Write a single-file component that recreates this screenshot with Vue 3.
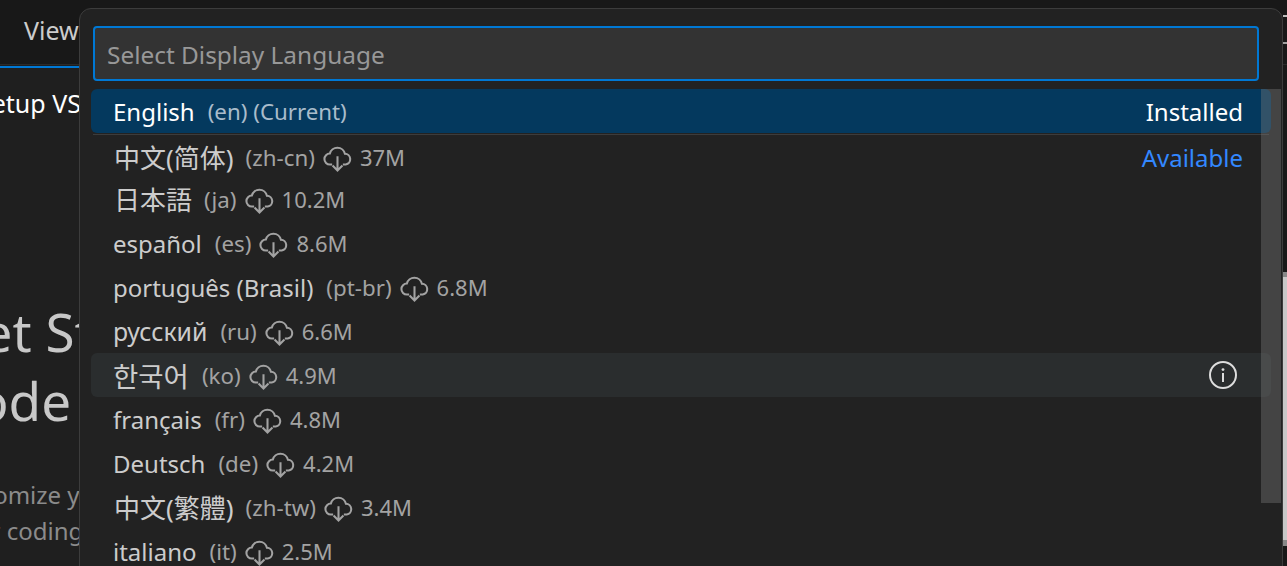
<script setup>
const rows = [
  { label: 'English', desc: '(en) (Current)', right: 'Installed', cls: 'selected', lang: 'en' },
  { label: '中文(简体)', desc: '(zh-cn)', size: '37M', right: 'Available', cls: 'first cjk', lang: 'zh-CN' },
  { label: '日本語', desc: '(ja)', size: '10.2M', cls: 'cjk', lang: 'ja' },
  { label: 'español', desc: '(es)', size: '8.6M', lang: 'es' },
  { label: 'português (Brasil)', desc: '(pt-br)', size: '6.8M', lang: 'pt' },
  { label: 'русский', desc: '(ru)', size: '6.6M', cls: 'ru', lang: 'ru' },
  { label: '한국어', desc: '(ko)', size: '4.9M', cls: 'hover ko', info: true, lang: 'ko' },
  { label: 'français', desc: '(fr)', size: '4.8M', lang: 'fr' },
  { label: 'Deutsch', desc: '(de)', size: '4.2M', lang: 'de' },
  { label: '中文(繁體)', desc: '(zh-tw)', size: '3.4M', cls: 'cjk', lang: 'zh-TW' },
  { label: 'italiano', desc: '(it)', size: '2.5M', lang: 'it' }
]
</script>

<template>
  <div class="page">
    <header class="topbar">
      <span class="menu">View</span>
    </header>
    <div class="tabline"></div>
    <main class="content">
      <div class="crumb">Setup VS</div>
      <h1 class="title">Get St<br /><span class="code">Code</span></h1>
      <p class="sub">Customize y</p>
      <p class="sub second">your coding</p>
    </main>

    <div class="edge">
      <i class="tick t1"></i>
      <i class="tick t2"></i>
      <i class="tick t3"></i>
      <i class="strip"></i>
    </div>

    <section class="picker">
      <div class="input">Select Display Language</div>
      <ul class="list">
        <li v-for="r in rows" :key="r.label" class="row" :class="r.cls" :lang="r.lang">
          <span class="label">{{ r.label }}</span>
          <span class="desc">{{ r.desc }}</span>
          <svg v-if="r.size" class="cloud" viewBox="0 0 16 16" fill="none" stroke="currentColor" stroke-width="1">
            <path d="M5.4 11.4H4.3A2.65 2.65 0 0 1 4.3 6.1 3.75 3.75 0 0 1 11.6 6.2 2.62 2.62 0 0 1 12 11.4H10.6" />
            <path d="M8 7.4V14.2M5.6 11.9L8 14.3 10.4 11.9" />
          </svg>
          <span v-if="r.size" class="size">{{ r.size }}</span>
          <span v-if="r.right" class="right" :class="{ avail: r.right === 'Available' }">{{ r.right }}</span>
          <svg v-if="r.info" class="info" viewBox="0 0 28 28" fill="none" stroke="currentColor">
            <circle cx="14" cy="14" r="13" stroke-width="2" />
            <path d="M14 12v9" stroke-width="2" />
            <circle cx="14" cy="8.6" r="1.4" fill="currentColor" stroke="none" />
          </svg>
        </li>
      </ul>
      <div class="thumb"></div>
    </section>
  </div>
</template>

<style>
html, body { margin: 0; background: #181818; overflow: hidden; }
</style>

<style scoped>
.page {
  position: relative;
  width: 1287px;
  height: 566px;
  overflow: hidden;
  background: #1f1f1f;
  font-family: "Noto Sans", "Noto Sans CJK SC", sans-serif;
  color: #ccc;
}
.topbar {
  height: 64px;
  background: #181818;
  border-bottom: 1px solid #2b2b2b;
  display: flex;
  align-items: center;
  padding-left: 24px;
}
.menu { font-size: 25px; color: #ccc; margin-top: -5px; }
.tabline { height: 2px; margin-top: 1px; background: #0078d4; width: 100px; }
.content { width: 79px; overflow: hidden; white-space: nowrap; }
.crumb { font-size: 25px; color: #fff; margin: 19px 0 0 -22px; line-height: 32px; }
.title { font-size: 53px; font-weight: 400; line-height: 69px; color: #c8c8c8; margin: 178px 0 0 -56px; }
.code { margin-left: -1px; }
.sub { font-size: 24px; color: #8b8b8b; margin: 0; line-height: 36px; }
.sub:first-of-type { margin: 42px 0 0 -57px; }
.second { margin-left: -51px; }

.edge { position: absolute; right: 0; top: 0; width: 4px; height: 566px; background: #181818; }
.tick { position: absolute; left: 0; width: 4px; height: 2px; background: #bbb; }
.t1 { top: 15px; }
.t2 { top: 42px; background: #a0a0a0; }
.t3 { top: 64px; height: 1px; background: #2b2b2b; }
.strip {
  position: absolute;
  left: 0;
  top: 272px;
  width: 4px;
  height: 274px;
  box-sizing: border-box;
  background: #c8c8c8;
  border-top: 5px solid #888;
  border-bottom: 6px solid #888;
}

.picker {
  position: absolute;
  left: 79px;
  top: 8px;
  width: 1204px;
  height: 600px;
  box-sizing: border-box;
  background: #222;
  border: 1px solid #3c3c3c;
  border-radius: 12px;
  padding: 17px 23px 0 13px;
}
.input {
  height: 55px;
  box-sizing: border-box;
  background: #333;
  border: 2px solid #0078d4;
  border-radius: 4px;
  padding-left: 12px;
  font-size: 24.4px;
  line-height: 54px;
  color: #989898;
}
.list { list-style: none; margin: 8px -12px 0 -2px; padding: 0; }
.row {
  position: relative;
  height: 44px;
  display: flex;
  align-items: center;
  padding: 0 28px 0 22px;
  border-radius: 6px;
  box-sizing: border-box;
  font-size: 22px;
  color: #a3a3a3;
}
.first { padding-top: 4px; }
.label { font-size: 24px; color: #ccc; margin-right: 13px; }
.cjk .label { font-size: 26px; margin-left: 1px; margin-right: 12px; }
.ko .label { font-size: 27.5px; }
.ru .label { font-size: 24.8px; }
.desc { font-size: 22.3px; margin-right: 6px; }
.cloud { width: 33px; height: 33px; margin-right: 6px; flex: none; }
.size { font-size: 22px; }
.right { margin-left: auto; font-size: 24px; }
.avail { color: #3388ff; }
.selected { background: #04395e; color: #a9bccb; }
.selected .label, .selected .right { color: #fff; }
.selected::after {
  content: "";
  position: absolute;
  left: 2px;
  right: 2px;
  bottom: -2px;
  height: 1px;
  background: #3c3c3c;
}
.hover { background: #2a2d2e; }
.info { width: 28px; height: 28px; margin-left: auto; margin-right: 6px; margin-top: -1px; color: #ddd; }
.thumb {
  position: absolute;
  left: 1181px;
  top: 80px;
  width: 20px;
  height: 414px;
  background: rgba(121, 121, 121, 0.4);
}
</style>
